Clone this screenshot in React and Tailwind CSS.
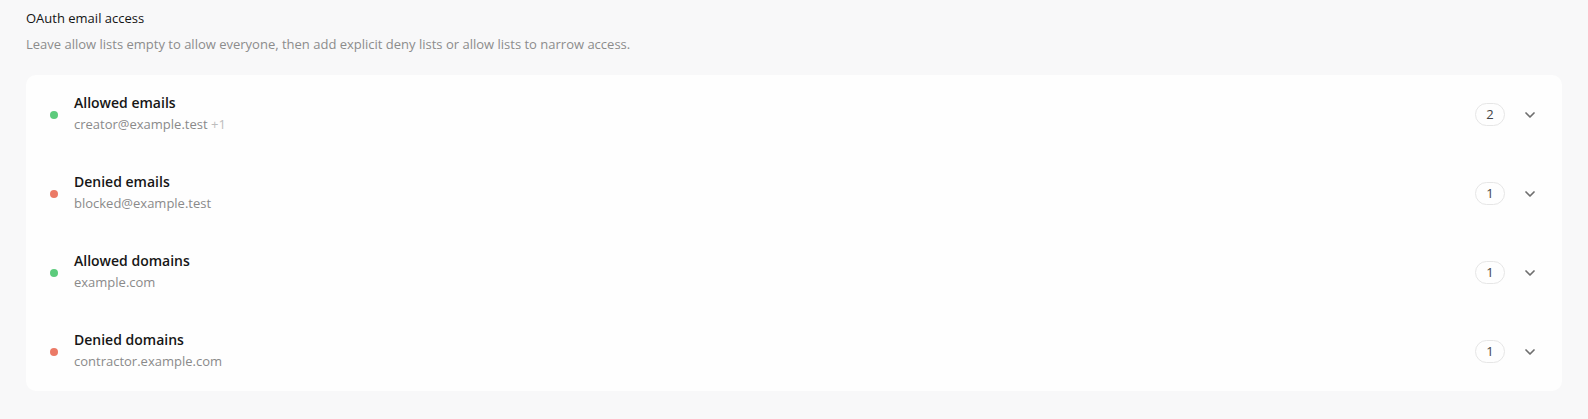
import { ChevronDown } from 'lucide-react';

const lists = [
  { label: 'Allowed emails', tone: 'allow', values: ['creator@example.test', 'reviewer@example.test'] },
  { label: 'Denied emails', tone: 'deny', values: ['blocked@example.test'] },
  { label: 'Allowed domains', tone: 'allow', values: ['example.com'] },
  { label: 'Denied domains', tone: 'deny', values: ['contractor.example.com'] },
];

function ListRow({ label, tone, values }) {
  const extra = values.length - 1;
  return (
    <div className="h-[79px] flex items-center px-6">
      <span className={`w-2 h-2 rounded-full flex-shrink-0 ${tone === 'allow' ? 'bg-[#5ccb7c]' : 'bg-[#eb7a66]'}`} />
      <div className="ml-4 flex-1 min-w-0 pb-[2px]">
        <div className="text-[14px] leading-5 font-semibold text-[#161616]">{label}</div>
        <div className="text-[13px] leading-5 mt-[1px] text-[#8a8a8a]">
          {values[0]}
          {extra > 0 && <span className="text-[#bdbdbd]"> +{extra}</span>}
        </div>
      </div>
      <span className="h-[23px] min-w-[30px] px-2 rounded-full border border-[#e6e6e6] flex items-center justify-center text-[13px] text-[#444]">
        {values.length}
      </span>
      <button className="ml-[17px] w-4 h-4 flex items-center justify-center text-[#6e6e6e]">
        <ChevronDown size={16} strokeWidth={2.6} />
      </button>
    </div>
  );
}

export default function App() {
  return (
    <div className="min-h-[419px] bg-[#f8f8f9] px-[26px] pt-2 pb-7 font-['Open_Sans',sans-serif]">
      <h2 className="text-[13px] leading-5 font-medium text-[#141414]">OAuth email access</h2>
      <p className="mt-1.5 text-[13px] leading-5 text-[#8c8c8c]">
        Leave allow lists empty to allow everyone, then add explicit deny lists or allow lists to narrow access.
      </p>
      <div className="mt-[21px] bg-[#fefefe] rounded-[10px]">
        {lists.map(l => (
          <ListRow key={l.label} {...l} />
        ))}
      </div>
    </div>
  );
}
